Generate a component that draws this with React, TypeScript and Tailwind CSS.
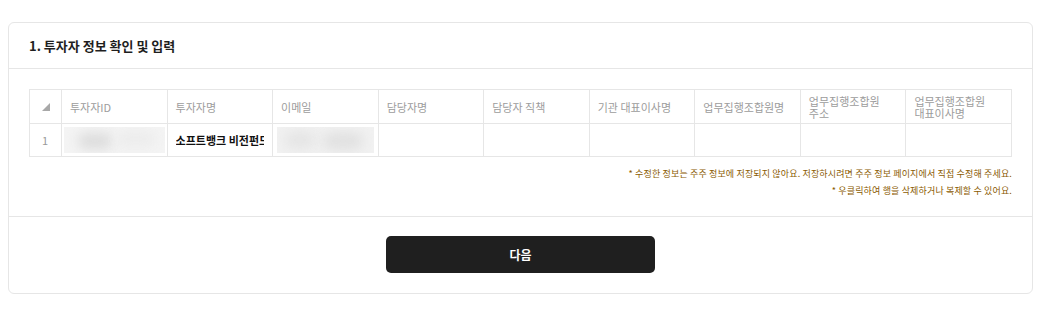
export default function App() {
  const headers: string[][] = [
    ["투자자ID"],
    ["투자자명"],
    ["이메일"],
    ["담당자명"],
    ["담당자 직책"],
    ["기관 대표이사명"],
    ["업무집행조합원명"],
    ["업무집행조합원", "주소"],
    ["업무집행조합원", "대표이사명"],
  ];

  return (
    <div
      className="min-h-[330px] bg-white pt-[22px] pl-2 pr-5"
      style={{ fontFamily: '"Noto Sans CJK KR", "Noto Sans", sans-serif' }}
    >
      <div className="rounded-md border border-[#e6e6e6] bg-white">
        {/* Header */}
        <div className="flex h-[46px] items-center border-b border-[#e6e6e6] px-5">
          <div className="text-[13px] font-bold text-[#1f1f1f]">1. 투자자 정보 확인 및 입력</div>
        </div>

        {/* Body */}
        <div className="border-b border-[#e6e6e6] px-5 pt-5 pb-[17px]">
          <table className="w-full table-fixed border-collapse text-[11px]">
            <colgroup>
              <col className="w-[32px]" />
              {headers.map((_, i) => (
                <col key={i} />
              ))}
            </colgroup>
            <thead>
              <tr className="h-[34px]">
                <th className="border border-[#e6e6e6] p-0">
                  <svg width="8" height="8" viewBox="0 0 8 8" className="mx-auto">
                    <polygon points="8,0 8,8 0,8" fill="#a8a8a8" />
                  </svg>
                </th>
                {headers.map((h, i) => (
                  <th
                    key={i}
                    className="border border-[#e6e6e6] px-2 text-left align-middle font-normal leading-[12px] whitespace-nowrap text-[#9c9c9c]"
                  >
                    {h.map((line, j) => (
                      <div key={j}>{line}</div>
                    ))}
                  </th>
                ))}
              </tr>
            </thead>
            <tbody>
              <tr className="h-[33px]">
                <td className="border border-[#e6e6e6] pl-3 text-left text-[#9a9a9a]">1</td>
                <td className="border border-[#e6e6e6] px-[2px] py-[3px]">
                  <div className="relative h-[26px] overflow-hidden bg-[#f4f4f4]">
                    <div className="absolute top-[6px] left-[14px] h-[16px] w-[34px] rounded-full bg-[#dcdcdc] blur-[6px]" />
                    <div className="absolute top-[4px] left-[52px] h-[16px] w-[40px] rounded-full bg-[#ececec] blur-[6px]" />
                  </div>
                </td>
                <td className="border border-[#e6e6e6] px-2">
                  <div className="w-[88px] overflow-hidden font-bold whitespace-nowrap text-[#111]">
                    소프트뱅크 비전펀드
                  </div>
                </td>
                <td className="border border-[#e6e6e6] px-1 py-[3px]">
                  <div className="relative h-[26px] overflow-hidden bg-[#f1f1f1]">
                    <div className="absolute top-[5px] left-[8px] h-[16px] w-[30px] rounded-full bg-[#e4e4e4] blur-[6px]" />
                    <div className="absolute top-[6px] left-[46px] h-[16px] w-[40px] rounded-full bg-[#e0e0e0] blur-[6px]" />
                  </div>
                </td>
                {[0, 1, 2, 3, 4, 5].map((i) => (
                  <td key={i} className="border border-[#e6e6e6]" />
                ))}
              </tr>
            </tbody>
          </table>

          <div className="mt-2 text-right text-[9px] leading-[17px] tracking-[0.15px] text-[#8a5a00]">
            <div>* 수정한 정보는 주주 정보에 저장되지 않아요. 저장하시려면 주주 정보 페이지에서 직접 수정해 주세요.</div>
            <div>* 우클릭하여 행을 삭제하거나 복제할 수 있어요.</div>
          </div>
        </div>

        {/* Footer */}
        <div className="flex justify-center pt-[19px] pb-5">
          <button className="h-[37px] w-[269px] rounded-[5px] bg-[#1f1f1f] text-[12px] font-bold text-white">
            다음
          </button>
        </div>
      </div>
    </div>
  );
}
